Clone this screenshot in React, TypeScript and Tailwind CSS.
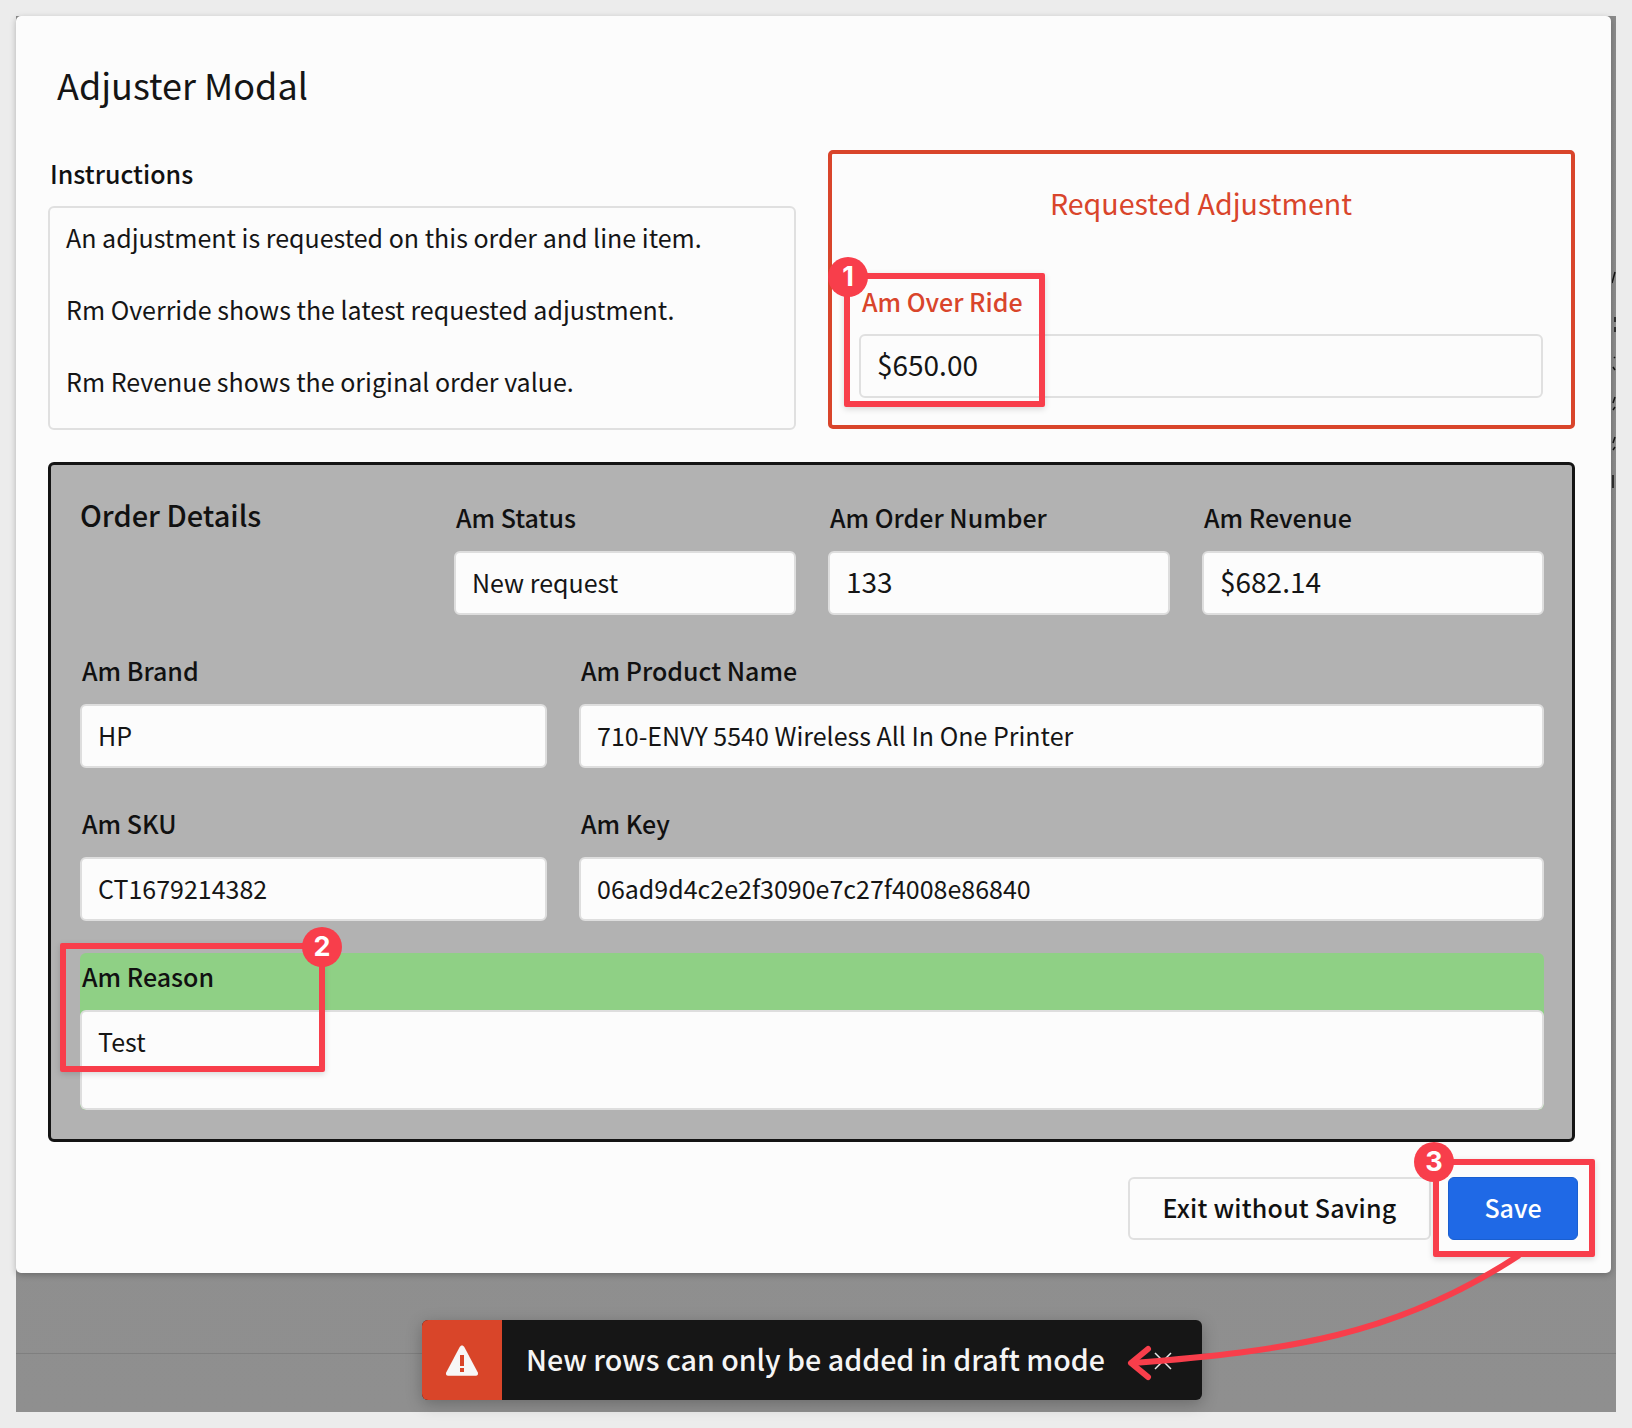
const font = { fontFamily: '"Noto Sans CJK JP", "Noto Sans", sans-serif' }

function Field({ label, value, className = '', big = false }: { label: string; value: string; className?: string; big?: boolean }) {
  return (
    <div className={className}>
      <div className="h-[40px] pl-[2px] pt-[1px] text-[25px] leading-[36px] font-medium text-[#111]">{label}</div>
      <div className={`mt-[13px] flex h-[64px] items-center rounded-[6px] border-2 border-[#dedede] bg-[#fcfcfc] px-[16px] ${big ? 'pb-[5px] text-[28px]' : 'text-[25px]'} text-[#151515]`}>
        {value}
      </div>
    </div>
  )
}

function Badge({ n, className }: { n: number; className: string }) {
  return (
    <div className={`absolute flex h-[40px] w-[40px] items-center justify-center rounded-full bg-[#f83e4b] text-[27px] font-bold text-white ${className}`} style={{ fontFamily: 'Inter, sans-serif' }}>
      {n}
    </div>
  )
}

export default function App() {
  return (
    <div className="h-[1428px] w-[1632px] overflow-hidden bg-[#ececec] p-4" style={font}>
      <div className="relative h-[1396px] w-[1600px] bg-gradient-to-b from-[#8b8b8b] to-[#8f8f8f]">
        {/* Modal */}
        <div className="relative h-[1257px] w-[1595px] rounded-[5px] bg-[#fcfcfc] pl-[32px] pr-[36px] shadow-[0_2px_6px_rgba(0,0,0,0.25)]">
          <h1 className="pl-[9px] pt-[41px] text-[36px] leading-[54px] font-normal text-[#151515]">Adjuster Modal</h1>

          <div className="mt-[39px] flex gap-[32px]">
            <div className="w-[749px]">
              <div className="pl-[2px] pt-[5px] text-[25px] leading-[36px] font-medium text-[#111]">Instructions</div>
              <div className="mt-[15px] h-[224px] rounded-[6px] border-2 border-[#e0e0e0] px-[16px] pt-[11px] text-[25px] leading-[36px] text-[#151515]">
                <p>An adjustment is requested on this order and line item.</p>
                <p className="mt-[36px]">Rm Override shows the latest requested adjustment.</p>
                <p className="mt-[36px]">Rm Revenue shows the original order value.</p>
              </div>
            </div>
            <div className="h-[279px] w-[748px] rounded-[5px] border-[4px] border-[#d9452b] pl-[27px] pr-[28px] pt-[27px]">
              <div className="text-center text-[28.6px] leading-[44px] text-[#d9452b]">Requested Adjustment</div>
              <div className="mt-[58px] pl-[3px] text-[25px] leading-[36px] font-medium text-[#d9452b]">Am Over Ride</div>
              <div className="mt-[15px] flex h-[64px] items-center rounded-[6px] border-2 border-[#e0e0e0] px-[16px] pb-[5px] text-[28px] text-[#151515]">$650.00</div>
            </div>
          </div>

          {/* Order details */}
          <div className="mt-[32px] h-[680px] w-[1527px] rounded-[6px] border-[3px] border-[#141414] bg-[#b2b2b2] pl-[29px] pr-[28px] pt-[33px]">
            <div className="grid grid-cols-4 gap-x-[32px]">
              <div className="text-[29px] leading-[33px] font-medium text-[#111]">Order Details</div>
              <Field label="Am Status" value="New request" />
              <Field label="Am Order Number" value="133" big />
              <Field label="Am Revenue" value="$682.14" big />
            </div>
            <div className="mt-[36px] flex gap-[32px]">
              <Field label="Am Brand" value="HP" className="w-[467px]" />
              <Field label="Am Product Name" value="710-ENVY 5540 Wireless All In One Printer" className="flex-1" />
            </div>
            <div className="mt-[36px] flex gap-[32px]">
              <Field label="Am SKU" value="CT1679214382" className="w-[467px]" />
              <Field label="Am Key" value="06ad9d4c2e2f3090e7c27f4008e86840" className="flex-1" />
            </div>
            <div className="mt-[32px] h-[157px] overflow-hidden rounded-[6px] bg-[#8fd085]">
              <div className="h-[57px] pl-[2px] pt-[5px] text-[25px] leading-[36px] font-medium text-[#111]">Am Reason</div>
              <div className="h-[100px] rounded-[6px] border-2 border-[#dedede] bg-[#fcfcfc] px-[16px] pt-[11px] text-[25px] leading-[36px] text-[#151515]">Test</div>
            </div>
          </div>

          {/* Footer buttons */}
          <div className="mt-[35px] flex justify-end gap-[17px]">
            <button className="h-[63px] w-[303px] rounded-[6px] border-2 border-[#e0e0e0] pb-[2px] text-[25px] font-medium tracking-[0.2px] text-[#111]">Exit without Saving</button>
            <button className="-mr-[3px] h-[63px] w-[130px] rounded-[6px] border border-[#1a5fd0] bg-[#1f69e6] pb-[2px] text-[25px] font-medium text-white">Save</button>
          </div>
        </div>

        {/* Divider in the page behind the modal */}
        <div className="mt-[80px] h-[1px] bg-[#7f7f7f]" />

        {/* Clipped text of the page behind the modal, seen in the strip on the right */}
        <svg className="absolute left-[1596px] top-0" width="4" height="500" fill="none" stroke="#111" strokeWidth="1.500">
          <path d="M0 267L3 256" />
          <path d="M3 301v5M3 311v5" />
          <path d="M2 342L3 341M1 351L3 354" />
          <path d="M1 387L3 381M1 394L3 391" />
          <path d="M1 427L3 421M1 434L3 431" />
          <path d="M1 459v13" />
        </svg>

        {/* Toast */}
        <div className="absolute left-[406px] top-[1304px] flex h-[80px] w-[780px] items-center overflow-hidden rounded-[6px] bg-[#161616] shadow-[0_4px_16px_rgba(0,0,0,0.25)]">
          <div className="flex h-full w-[80px] items-center justify-center bg-[#d94529]">
            <svg width="34" height="34" viewBox="0 0 34 34">
              <path d="M17 2.500c1 0 1.800.6 2.300 1.500l13.500 25.500c.8 1.600-.2 3.200-1.900 3.200H3.100c-1.700 0-2.700-1.600-1.900-3.200L14.700 4c.5-.9 1.300-1.500 2.300-1.500z" fill="#f7f7f7" />
              <rect x="15" y="12" width="4" height="11" fill="#d94529" />
              <rect x="15" y="25" width="4" height="4" fill="#d94529" />
            </svg>
          </div>
          <div className="pb-[2px] pl-[24px] text-[28.6px] font-medium text-[#f5f5f5]">New rows can only be added in draft mode</div>
          <svg className="absolute left-[732px] top-[32px]" width="18" height="18" viewBox="0 0 18 18" stroke="#e8e8e8" strokeWidth="1.500">
            <path d="M1 1l16 16M17 1L1 17" />
          </svg>
        </div>

        {/* Annotations */}
        <div className="absolute left-[828px] top-[257px] h-[134px] w-[201px] rounded-[2px] border-[6px] border-[#f83e4b] shadow-[0_2px_6px_rgba(0,0,0,0.15)]" />
        <Badge n={1} className="left-[812px] top-[241px]" />
        <div className="absolute left-[44px] top-[927px] h-[129px] w-[265px] rounded-[2px] border-[6px] border-[#f83e4b] shadow-[0_2px_6px_rgba(0,0,0,0.15)]" />
        <Badge n={2} className="left-[286px] top-[911px]" />
        <div className="absolute left-[1417px] top-[1143px] h-[98px] w-[162px] rounded-[2px] border-[6px] border-[#f83e4b] shadow-[0_2px_6px_rgba(0,0,0,0.15)]" />
        <Badge n={3} className="left-[1398px] top-[1126px]" />
        <svg className="absolute left-0 top-0" width="1600" height="1396" fill="none" stroke="#f83e4b" strokeWidth="6" strokeLinecap="round" strokeLinejoin="round" style={{ pointerEvents: 'none' }}>
          <path d="M1502 1240C1380 1320 1270 1335 1117 1347" />
          <path d="M1132 1333L1115 1347L1132 1361" />
        </svg>
      </div>
    </div>
  )
}
